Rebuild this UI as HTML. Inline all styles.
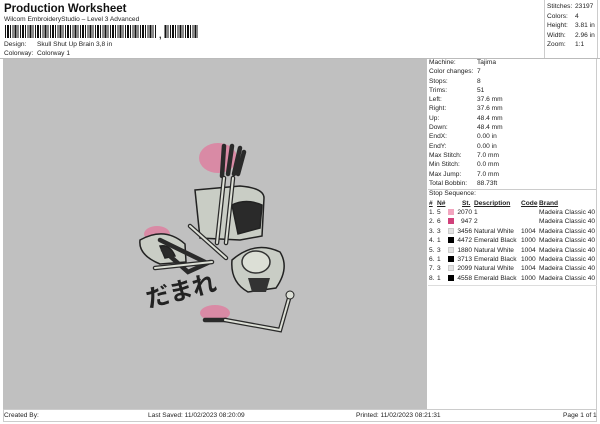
<!DOCTYPE html>
<html><head><meta charset="utf-8"><style>
*{margin:0;padding:0;box-sizing:border-box}
body{width:600px;height:424px;background:#fff;font-family:"Liberation Sans",sans-serif;color:#222;position:relative;overflow:hidden;font-size:6.6px}
.a{position:absolute;white-space:nowrap;line-height:9px}
</style></head><body>
<div class="a" style="left:4px;top:3px;font-size:11.5px;font-weight:bold;line-height:13px;color:#111">Production Worksheet</div>
<div class="a" style="left:4px;top:15px">Wilcom EmbroideryStudio – Level 3 Advanced</div>
<div class="a" style="left:5px;top:25px;width:193px;height:13px;background:repeating-linear-gradient(90deg,#111 0 1px,#fff 1px 2px,#111 2px 4px,#fff 4px 5px,#111 5px 6px,#fff 6px 7.5px)"></div>
<div class="a" style="left:157px;top:25px;width:7px;height:14px;background:#fff"></div>
<div class="a" style="left:159px;top:31px;font-size:9px;font-weight:bold">,</div>
<div class="a" style="left:4px;top:41px;line-height:8px">Design:</div><div class="a" style="left:37px;top:41px;line-height:8px">Skull Shut Up Brain 3,8 in</div>
<div class="a" style="left:4px;top:50px;line-height:8px">Colorway:</div><div class="a" style="left:37px;top:50px;line-height:8px">Colorway 1</div>
<div class="a" style="left:0;top:58px;width:600px;height:1px;background:#bbb"></div>
<div class="a" style="left:544px;top:0;width:1px;height:58px;background:#ccc"></div>
<div class="a" style="left:597px;top:0;width:1px;height:58px;background:#ccc"></div>
<div class="a" style="left:547px;top:2px;line-height:9.6px">Stitches:<br>Colors:<br>Height:<br>Width:<br>Zoom:</div>
<div class="a" style="left:575px;top:2px;line-height:9.6px">23197<br>4<br>3.81 in<br>2.96 in<br>1:1</div>
<div class="a" style="left:3px;top:59px;width:424px;height:350px;background:#c0c0c0"></div>
<div class="a" style="left:428px;top:59px;width:169px;height:350px;border-right:1px solid #ccc"></div>
<div class="a" style="left:429px;top:58px;line-height:9.3px">Machine:<br>Color changes:<br>Stops:<br>Trims:<br>Left:<br>Right:<br>Up:<br>Down:<br>EndX:<br>EndY:<br>Max Stitch:<br>Min Stitch:<br>Max Jump:<br>Total Bobbin:</div>
<div class="a" style="left:477px;top:58px;line-height:9.3px">Tajima<br>7<br>8<br>51<br>37.6 mm<br>37.6 mm<br>48.4 mm<br>48.4 mm<br>0.00 in<br>0.00 in<br>7.0 mm<br>0.0 mm<br>7.0 mm<br>88.73ft</div>
<div class="a" style="left:428px;top:189px;width:169px;height:1px;background:#ccc"></div>
<div class="a" style="left:429px;top:189px">Stop Sequence:</div>
<div class="a" style="left:429px;top:199px;font-weight:bold;text-decoration:underline">#</div>
<div class="a" style="left:437px;top:199px;font-weight:bold;text-decoration:underline">N#</div>
<div class="a" style="left:462px;top:199px;font-weight:bold;text-decoration:underline">St.</div>
<div class="a" style="left:474px;top:199px;font-weight:bold;text-decoration:underline">Description</div>
<div class="a" style="left:521px;top:199px;font-weight:bold;text-decoration:underline">Code</div>
<div class="a" style="left:539px;top:199px;font-weight:bold;text-decoration:underline">Brand</div>
<div class="a" style="left:429px;top:208px;line-height:9.4px">1.<br>2.<br>3.<br>4.<br>5.<br>6.<br>7.<br>8.</div>
<div class="a" style="left:437px;top:208px;line-height:9.4px">5<br>6<br>3<br>1<br>3<br>1<br>3<br>1</div>
<div class="a" style="left:448px;top:209px;width:6px;height:6px;background:#f2a5bf"></div>
<div class="a" style="left:448px;top:218.4px;width:6px;height:6px;background:#d0407a"></div>
<div class="a" style="left:448px;top:227.8px;width:6px;height:6px;background:#e4e4e4;border:1px solid #ccc"></div>
<div class="a" style="left:448px;top:237.2px;width:6px;height:6px;background:#000"></div>
<div class="a" style="left:448px;top:246.6px;width:6px;height:6px;background:#e4e4e4;border:1px solid #ccc"></div>
<div class="a" style="left:448px;top:256px;width:6px;height:6px;background:#000"></div>
<div class="a" style="left:448px;top:265.4px;width:6px;height:6px;background:#e4e4e4;border:1px solid #ccc"></div>
<div class="a" style="left:448px;top:274.8px;width:6px;height:6px;background:#000"></div>
<div class="a" style="left:455px;top:208px;line-height:9.4px;text-align:right;width:17px">2070<br>947<br>3456<br>4472<br>1880<br>3713<br>2099<br>4558</div>
<div class="a" style="left:474px;top:208px;line-height:9.4px">1<br>2<br>Natural White<br>Emerald Black<br>Natural White<br>Emerald Black<br>Natural White<br>Emerald Black</div>
<div class="a" style="left:521px;top:208px;line-height:9.4px"><br><br>1004<br>1000<br>1004<br>1000<br>1004<br>1000</div>
<div class="a" style="left:539px;top:208px;line-height:9.4px">Madeira Classic 40<br>Madeira Classic 40<br>Madeira Classic 40<br>Madeira Classic 40<br>Madeira Classic 40<br>Madeira Classic 40<br>Madeira Classic 40<br>Madeira Classic 40</div>
<div class="a" style="left:428px;top:285px;width:169px;height:1px;background:#ddd"></div>
<div class="a" style="left:3px;top:409px;width:594px;height:13px;border:1px solid #ccc"></div>
<div class="a" style="left:4px;top:411px">Created By:</div>
<div class="a" style="left:148px;top:411px">Last Saved: 11/02/2023 08:20:09</div>
<div class="a" style="left:356px;top:411px">Printed: 11/02/2023 08:21:31</div>
<div class="a" style="left:563px;top:411px">Page 1 of 1</div>
<svg class="a" style="left:0;top:0" width="600" height="424" viewBox="0 0 600 424">
<g stroke="#222" stroke-width="1.5">
<ellipse cx="218" cy="158" rx="19" ry="15" fill="#d98aa5" stroke="none"/>
<ellipse cx="157" cy="234" rx="13" ry="8" fill="#d98aa5" stroke="none"/>
<ellipse cx="215" cy="313" rx="15" ry="8" fill="#d98aa5" stroke="none"/>
<path d="M195 190 L240 186 Q264 188 264 198 L262 236 L240 240 L200 238 Z" fill="#c9cdc5"/>
<path d="M232 205 Q246 198 262 205 L260 228 L238 234 Z" fill="#2a2a2a"/>
<path d="M140 240 Q165 226 185 244 L186 262 L160 264 Q138 255 140 240Z" fill="#c9cdc5"/>
<path d="M160 246 Q170 244 175 256 L165 258Z" fill="#2a2a2a"/>
<path d="M232 260 Q255 240 280 252 Q290 268 276 288 L248 292 Q230 282 232 260Z" fill="#c9cdc5"/>
<ellipse cx="256" cy="262" rx="14" ry="11" fill="#dcdfd6" stroke="#333"/>
<path d="M248 278 L270 278 L266 292 L252 292Z" fill="#333" stroke="none"/>
</g>
<g stroke="#2a2a2a" stroke-width="4.5" stroke-linecap="round" fill="none">
<path d="M217 243 L224 178 M226 243 L233 178"/>
<path d="M222 176 L224 146 M228 174 L232 146 M234 174 L240 148 M238 174 L244 152"/>
<path d="M190 226 L226 258"/>
<path d="M160 240 L205 262 M163 250 L188 272 L210 262"/>
<path d="M155 268 L212 262"/>
<path d="M225 320 L280 330 L290 295"/>
<path d="M205 320 L226 320"/>
</g>
<g stroke="#dcdfd6" stroke-width="2" stroke-linecap="round" fill="none">
<path d="M217 243 L224 178 M226 243 L233 178 M190 226 L226 258 M155 268 L212 262 M225 320 L280 330 L290 295"/>
</g>
<circle cx="290" cy="295" r="4" fill="#dcdfd6" stroke="#222"/>
<text x="146" y="302" font-family="Noto Sans CJK JP,sans-serif" font-size="24" font-weight="bold" fill="#222" transform="rotate(-14 170 295)">だまれ</text>
</svg>
</body></html>
